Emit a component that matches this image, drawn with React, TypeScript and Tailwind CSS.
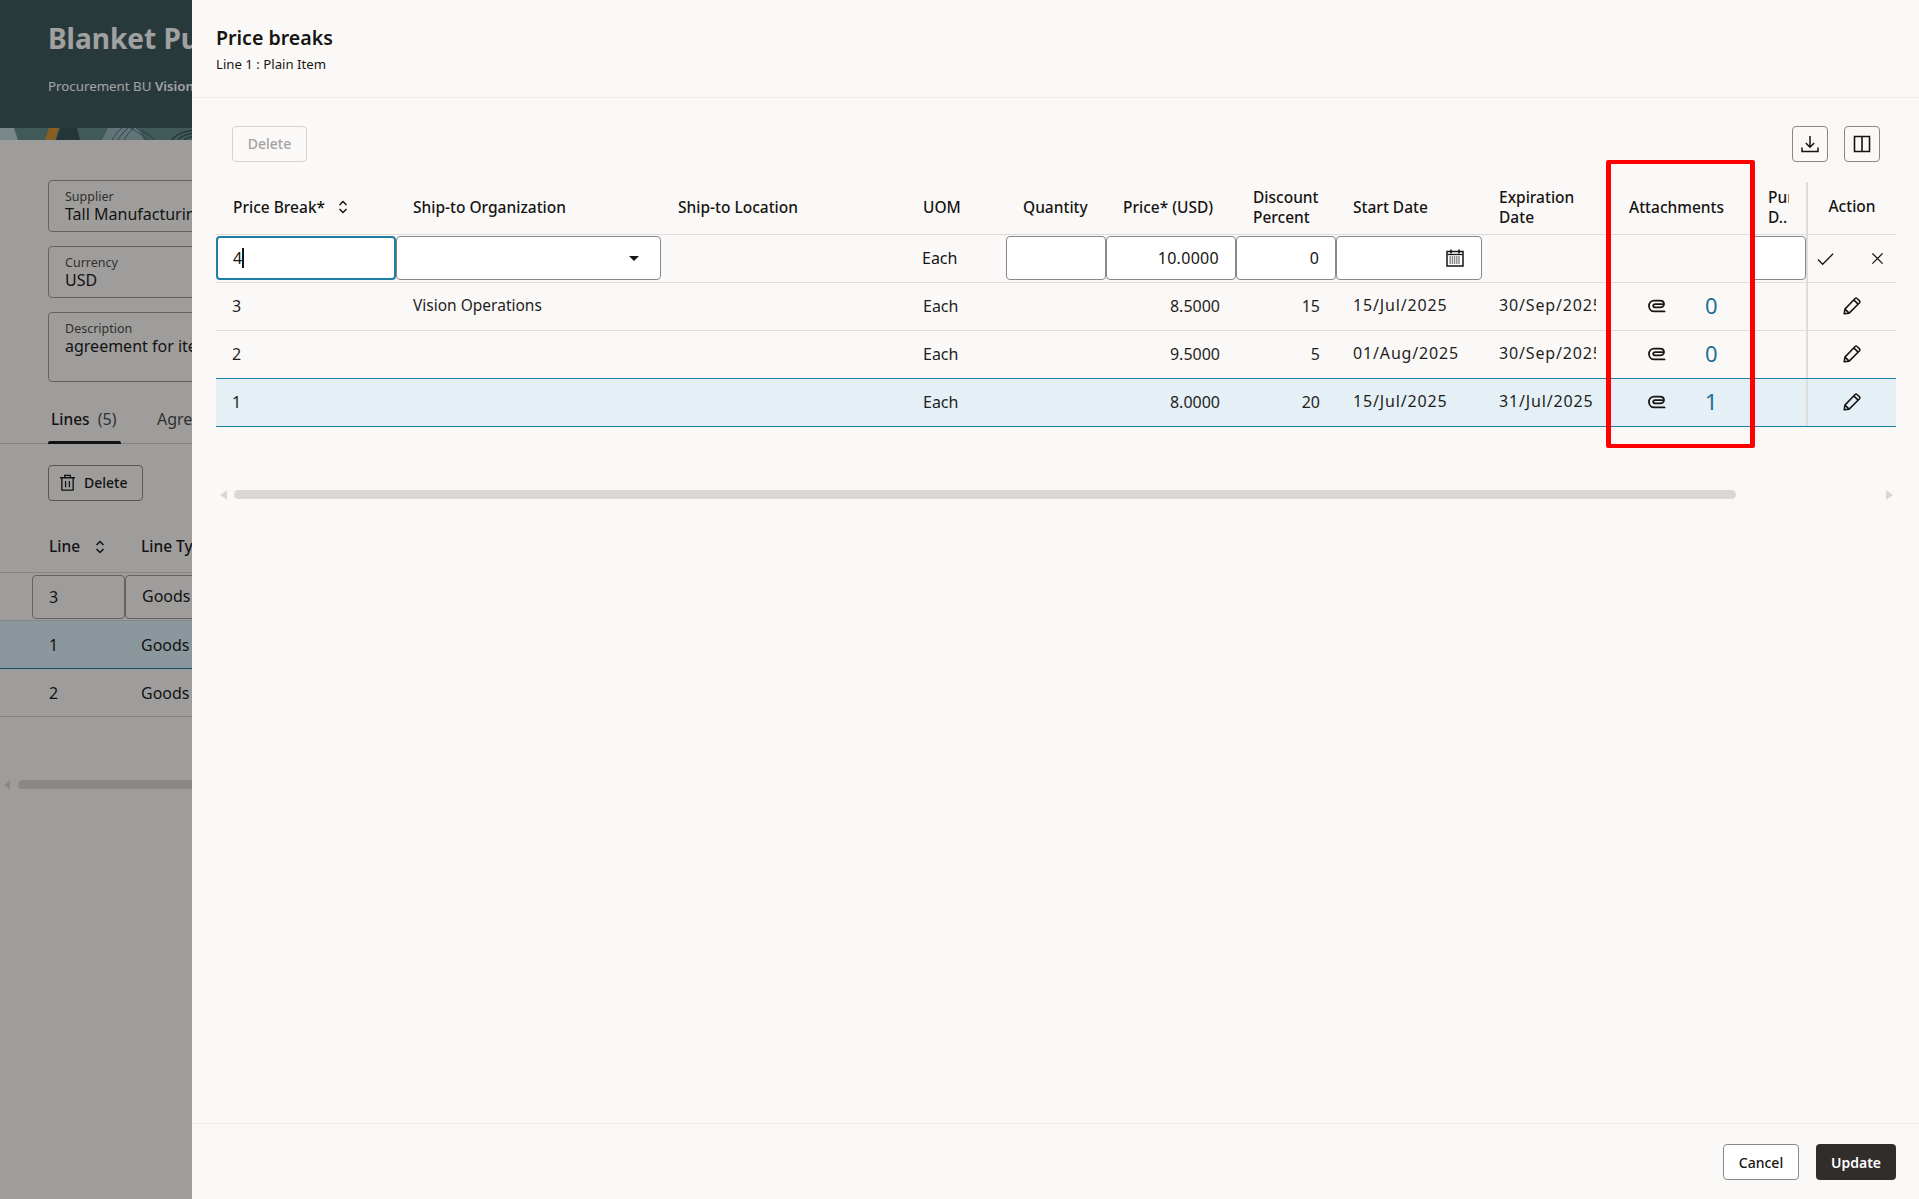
import React from "react";

const colW = ["w-[180px]", "w-[265px]", "w-[245px]", "w-[100px]", "w-[100px]", "w-[130px]", "w-[100px]", "w-[146px]", "w-[130px]", "w-[138px]", "w-[56px]", "w-[90px]"];

function Sort({ className = "" }: { className?: string }) {
  return (
    <svg viewBox="0 0 12 16" className={"w-[12px] h-[16px] " + className} fill="none" stroke="currentColor" strokeWidth="1.5">
      <path d="M2.5 6 6 2.5 9.5 6M2.5 10 6 13.5 9.5 10" />
    </svg>
  );
}

function Clip() {
  return (
    <svg viewBox="0 0 18 14" className="w-[18px] h-[14px] text-[#161513]" fill="none" stroke="currentColor" strokeWidth="1.8" strokeLinecap="round">
      <path d="M16.5 12.4H6.2C3.2 12.4 1 10 1 7s2.2-5.4 5.2-5.4h5.6c2.4 0 4.2 1.4 4.2 3.4s-1.8 3.4-4 3.4H7.2c-1.2 0-2-.7-2-1.6s.8-1.6 2-1.6h7" />
    </svg>
  );
}

function Pencil() {
  return (
    <svg viewBox="0 0 18 18" className="w-[20px] h-[20px] text-[#161513]" fill="none" stroke="currentColor" strokeWidth="1.4" strokeLinejoin="round">
      <path d="M2 16l.6-4.2L11.8 2.2c.5-.5 1.2-.5 1.7 0l2.3 2.2c.5.5.5 1.2 0 1.7L6.4 15.4 2 16zM2.6 11.8l3.8 3.6M10.6 3.5l3.9 3.8" />
    </svg>
  );
}

function Calendar() {
  return (
    <svg viewBox="0 0 18 18" className="w-[18px] h-[18px] text-[#161513]" fill="none" stroke="currentColor">
      <rect x="1" y="2.5" width="16" height="14.5" strokeWidth="1.5" />
      <path d="M5 .5v4M13 .5v4" strokeWidth="1.6" />
      <path d="M1.5 5.5h15" strokeWidth="1.3" />
      <path d="M3.5 8h11M3.5 10h11M3.5 12h11M3.5 14h11" strokeWidth="1.2" strokeDasharray="1.4 .8" />
    </svg>
  );
}

function FieldBox({ label, value, h = "h-[52px]" }: { label: string; value: string; h?: string }) {
  return (
    <div className={"w-[300px] rounded-[4px] border border-[#a09e9c] px-[16px] pt-[8px] " + h}>
      <div className="text-[12.5px] leading-[16px] text-[#4f4e4c] whitespace-nowrap">{label}</div>
      <div className="text-[16px] leading-[20px] -mt-[1px] text-[#1f1e1d] whitespace-nowrap">{value}</div>
    </div>
  );
}

function BgPage() {
  return (
    <div className="w-[192px] overflow-hidden">
      <div className="w-[600px]">
        <div className="h-[128px] bg-[#405b5f] pl-[48px] pt-[20px]">
          <div className="text-[28px] leading-[36px] font-bold text-white whitespace-nowrap">Blanket Purchase Agreement</div>
          <div className="mt-[20px] text-[13.3px] leading-[20px] text-white whitespace-nowrap">
            Procurement BU <span className="font-semibold">Vision Operations</span>
          </div>
        </div>
        <svg viewBox="0 0 195 12" preserveAspectRatio="none" className="block w-[195px] h-[12px]">
          <rect width="195" height="12" fill="#648f8c" />
          <path d="M0 0h14l4 12H0z" fill="#c0d6da" />
          <path d="M49 0h10l-4 12H45z" fill="#d8963c" />
          <path d="M60 0h17l3 12H56z" fill="#3a5658" />
          <path d="M108 0h30l6 12h-42z" fill="#9ab8bd" />
          <path d="M112 12c3-5 6-9 10-12M118 12c3-5 6-9 10-12M124 12c3-5 6-9 10-12M130 0c5 3 14 7 17 12M136 0c5 3 14 7 18 12M142 2c4 2 10 6 12 10" stroke="#4f6c70" strokeWidth="1" fill="none" />
          <path d="M172 12c3-5 12-9 23-10M178 12c3-4 9-6 17-7M184 12c2-2 6-3 11-4" stroke="#3a5256" strokeWidth="1.2" fill="none" />
        </svg>
        <div className="pl-[48px] pt-[40px] flex flex-col gap-[14px]">
          <FieldBox label="Supplier" value="Tall Manufacturing" />
          <FieldBox label="Currency" value="USD" />
          <FieldBox label="Description" value="agreement for items" h="h-[70px]" />
        </div>
        <div className="mt-[18px] h-[44px] border-b border-[#d5d3d1] pl-[51px] flex gap-[36px] text-[16px]">
          <div className="relative w-[70px] h-[43px] pt-[7px] whitespace-nowrap font-medium text-[#1f1e1d]">
            <span className="text-[15.5px]">Lines</span> <span className="font-normal text-[#4f4e4c] ml-[4px]">(5)</span>
            <div className="absolute -left-[3px] right-0 bottom-[-1px] h-[3px] rounded-t-[2px] bg-[#1f1e1d]" />
          </div>
          <div className="pt-[7px] text-[#4f4e4c]">Agreement</div>
        </div>
        <div className="pl-[48px] pt-[21px]">
          <div className="w-[95px] h-[36px] pb-[1px] rounded-[4px] border border-[#8a8886] flex items-center pl-[10px] gap-[8px] text-[14px] font-medium text-[#1f1e1d]">
            <svg viewBox="0 0 18 18" className="w-[17px] h-[19px]" fill="none" stroke="currentColor" strokeWidth="1.4">
              <path d="M1 4h16M6 4V1.5h6V4M3 4v13h12V4M7 7.5v6.5M11 7.5v6.5" />
            </svg>
            Delete
          </div>
        </div>
        <div className="mt-[30px] h-[42px] pb-[10px] flex items-center text-[15.5px] font-medium text-[#1f1e1d] border-b border-[#d5d3d1]">
          <div className="w-[141px] pl-[49px] flex items-center gap-[14px]">Line <Sort /></div>
          <div className="whitespace-nowrap">Line Type</div>
        </div>
        <div className="h-[48px] flex items-center border-b border-[#d5d3d1] text-[16px] text-[#1f1e1d]">
          <div className="ml-[32px] w-[93px] h-[44px] rounded-[4px] border border-[#a09e9c] pl-[16px] flex items-center">3</div>
          <div className="w-[100px] h-[44px] rounded-[4px] border border-[#a09e9c] pl-[16px] pb-[2px] flex items-center">Goods</div>
        </div>
        <div className="h-[48px] flex items-center bg-[#dcf0f8] border-b border-[#1f7ea3] text-[16px] text-[#1f1e1d]">
          <div className="w-[141px] pl-[49px]">1</div>
          <div>Goods</div>
        </div>
        <div className="h-[48px] flex items-center border-b border-[#d5d3d1] text-[16px] text-[#1f1e1d]">
          <div className="w-[141px] pl-[49px]">2</div>
          <div>Goods</div>
        </div>
        <div className="mt-[63px] flex items-center h-[9px] pl-[4px] gap-[8px]">
          <div className="w-0 h-0 border-y-[5px] border-y-transparent border-r-[6px] border-r-[#dad8d6]" />
          <div className="w-[400px] h-[9px] rounded-full bg-[#dad8d6]" />
        </div>
      </div>
    </div>
  );
}

const inputCls = "bg-white border border-[#8a8886] rounded-[4px] h-[44px] mt-[1px]";

function HeadCell({ i, children, cls = "" }: { i: number; children: React.ReactNode; cls?: string }) {
  return <div className={colW[i] + " shrink-0 pl-[17px] pb-[2px] flex items-center leading-[20px] " + cls}>{children}</div>;
}

function DataRow({ pb, org, price, disc, start, exp, n, selected }: { pb: string; org: string; price: string; disc: string; start: string; exp: string; n: string; selected?: boolean }) {
  return (
    <div className={"flex text-[16px] text-[#1f1e1d] items-center " + (selected ? "bg-[#e4f0f6] border-y border-[#1f7ea3] -mt-[1px] h-[49px]" : "h-[48px] border-b border-[#dfdddb]")}>
      <div className={colW[0] + " pl-[16px] pb-[2px]"}>{pb}</div>
      <div className={colW[1] + " pl-[17px] pb-[1px] text-[15.5px] whitespace-nowrap"}>{org}</div>
      <div className={colW[2]} />
      <div className={colW[3] + " pl-[17px] pb-[2px]"}>Each</div>
      <div className={colW[4]} />
      <div className={colW[5] + " pr-[16px] pb-[2px] text-right"}>{price}</div>
      <div className={colW[6] + " pr-[16px] pb-[2px] text-right"}>{disc}</div>
      <div className={colW[7] + " pl-[17px] pb-[3px] whitespace-nowrap tracking-[0.85px]"}>{start}</div>
      <div className={colW[8] + " pl-[17px] pr-[16px] pb-[3px] tracking-[0.85px]"}><div className="overflow-hidden whitespace-nowrap">{exp}</div></div>
      <div className={colW[9] + " flex items-center pb-[2px]"}>
        <div className="ml-[36px]"><Clip /></div>
        <div className="ml-[39px] pb-[2px] text-[22px] leading-[24px] text-[#1d6f96]">{n}</div>
      </div>
      <div className={colW[10]} />
      <div className={colW[11] + " self-stretch border-l-2 border-[#dfdddb] flex items-center justify-center pb-[1px]"}><Pencil /></div>
    </div>
  );
}

function Drawer() {
  return (
    <div className="absolute left-[192px] right-0 top-0 bottom-0 bg-[#fbf9f8] flex flex-col text-[#161513]">
      <div className="h-[98px] border-b border-[#f0eeec] pl-[24px] pt-[24px] shrink-0">
        <div className="text-[19.6px] leading-[28px] font-semibold">Price breaks</div>
        <div className="text-[13.2px] leading-[20px] mt-[2px]">Line 1 : Plain Item</div>
      </div>
      <div className="flex-1 pl-[24px] pr-[22px] pt-[28px] min-h-0">
        <div className="flex justify-between h-[36px] pl-[16px] pr-[17px]">
          <div className="w-[75px] h-[36px] pb-[2px] rounded-[4px] border border-[#d5d3d1] flex items-center justify-center text-[14px] text-[#a5a3a1] font-medium">Delete</div>
          <div className="flex gap-[16px]">
            <div className="w-[36px] h-[36px] rounded-[4px] border border-[#8a8886] flex items-center justify-center">
              <svg viewBox="0 0 18 18" className="w-[18px] h-[18px]" fill="none" stroke="currentColor" strokeWidth="1.5">
                <path d="M9 1v11M4.8 8 9 12.2 13.2 8M1 12.5v4h16v-4" />
              </svg>
            </div>
            <div className="w-[36px] h-[36px] rounded-[4px] border border-[#8a8886] flex items-center justify-center">
              <svg viewBox="0 0 18 18" className="w-[18px] h-[18px]" fill="none" stroke="currentColor" strokeWidth="1.6">
                <path d="M1.5 1.5h15v15h-15zM9 1.5v15" />
              </svg>
            </div>
          </div>
        </div>
        <div className="relative mt-[20px] w-[1680px]">
          <div className="flex h-[53px] border-b border-[#dfdddb] text-[15.5px] font-medium">
            <HeadCell i={0} cls="pl-[15px] gap-[12px]">Price Break* <Sort /></HeadCell>
            <HeadCell i={1}>Ship-to Organization</HeadCell>
            <HeadCell i={2}>Ship-to Location</HeadCell>
            <HeadCell i={3}>UOM</HeadCell>
            <HeadCell i={4}>Quantity</HeadCell>
            <HeadCell i={5}>Price* (USD)</HeadCell>
            <HeadCell i={6}>Discount Percent</HeadCell>
            <HeadCell i={7}>Start Date</HeadCell>
            <HeadCell i={8}>Expiration Date</HeadCell>
            <HeadCell i={9}>Attachments</HeadCell>
            <HeadCell i={10} cls="pl-[18px]">
              <div className="w-[21px] overflow-hidden whitespace-nowrap">Purchase<br />D..</div>
            </HeadCell>
            <div className={colW[11] + " self-stretch pb-[2px] border-l-2 border-[#dfdddb] flex items-center justify-center"}>Action</div>
          </div>
          <div className="flex h-[48px] border-b border-[#dfdddb] text-[16px]">
            <div className={colW[0] + " bg-white border-2 border-[#1f7ea3] rounded-[4px] h-[44px] mt-[1px] pl-[15px] flex items-center"}>
              4<span className="inline-block w-[1.5px] h-[20px] bg-[#161513]" />
            </div>
            <div className={colW[1] + " " + inputCls + " flex items-center justify-end pr-[21px]"}>
              <div className="w-0 h-0 border-x-[5px] border-x-transparent border-t-[5px] border-t-[#161513]" />
            </div>
            <div className={colW[2]} />
            <div className={colW[3] + " pl-[16px] pb-[2px] flex items-center"}>Each</div>
            <div className={colW[4] + " " + inputCls} />
            <div className={colW[5] + " " + inputCls + " flex items-center justify-end pr-[16px] pb-[1px] tracking-[0.3px]"}>10.0000</div>
            <div className={colW[6] + " " + inputCls + " flex items-center justify-end pr-[16px] pb-[1px]"}>0</div>
            <div className={colW[7] + " " + inputCls + " flex items-center justify-end pr-[17px]"}><Calendar /></div>
            <div className={colW[8]} />
            <div className={colW[9]} />
            <div className={colW[10] + " " + inputCls} />
            <div className={colW[11] + " border-l-2 border-[#dfdddb] flex items-center justify-between pl-[9px] pr-[12px]"}>
              <svg viewBox="0 0 18 14" className="w-[17px] h-[14px]" fill="none" stroke="currentColor" strokeWidth="1.4"><path d="M1 7.5 6 12.5 17 1.5" /></svg>
              <svg viewBox="0 0 14 14" className="w-[13px] h-[13px]" fill="none" stroke="currentColor" strokeWidth="1.4"><path d="M1.5 1.5l11 11M12.5 1.5l-11 11" /></svg>
            </div>
          </div>
          <DataRow pb="3" org="Vision Operations" price="8.5000" disc="15" start="15/Jul/2025" exp="30/Sep/2025" n="0" />
          <DataRow pb="2" org="" price="9.5000" disc="5" start="01/Aug/2025" exp="30/Sep/2025" n="0" />
          <DataRow pb="1" org="" price="8.0000" disc="20" start="15/Jul/2025" exp="31/Jul/2025" n="1" selected />
          <div className="mt-[63px] flex items-center h-[9px] pl-[4px]">
            <div className="w-0 h-0 border-y-[5px] border-y-transparent border-r-[7px] border-r-[#dad8d6]" />
            <div className="ml-[7px] w-[1502px] h-[9px] rounded-full bg-[#dad8d6]" />
            <div className="ml-[150px] w-0 h-0 border-y-[5px] border-y-transparent border-l-[7px] border-l-[#dad8d6]" />
          </div>
          <div className="absolute left-[1390px] top-[-22px] w-[149px] h-[288px] border-x-[5px] border-y-[4px] border-[#ff0000] rounded-[2px]" />
        </div>
      </div>
      <div className="h-[76px] shrink-0 border-t border-[#f0eeec] flex items-start justify-end gap-[17px] pt-[20px] pr-[23px]">
        <div className="w-[76px] h-[36px] rounded-[4px] border border-[#8a8886] bg-white flex items-center justify-center text-[14px] font-medium">Cancel</div>
        <div className="w-[80px] h-[36px] rounded-[4px] bg-[#312d2a] text-white flex items-center justify-center text-[14px] font-semibold">Update</div>
      </div>
    </div>
  );
}

export default function App() {
  return (
    <div className="relative w-full h-[1199px] overflow-hidden bg-[#fbf9f8] font-['Noto_Sans',sans-serif]">
      <BgPage />
      <div className="absolute inset-0 bg-black/[0.37]" />
      <Drawer />
    </div>
  );
}
